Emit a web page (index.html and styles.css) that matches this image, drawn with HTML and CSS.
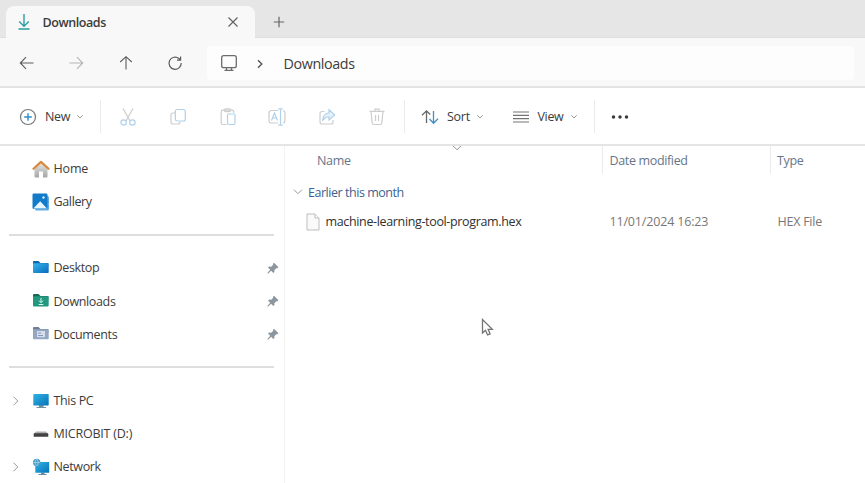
FILE: index.html
```
<!DOCTYPE html>
<html lang="en">
<head>
<meta charset="utf-8">
<title>Downloads</title>
<link rel="stylesheet" href="styles.css">
</head>
<body>
<div class="window">
  <header class="tabs">
    <div class="tab">
      <svg class="tab-icon" width="14" height="18" viewBox="0 0 14 18" fill="none" stroke="#2b9fa5" stroke-width="1.4"><path d="M7 1v12M2.2 8.5 7 13.2l4.800-4.700"/><path d="M1.500 16h11" stroke-width="1.500"/></svg>
      <span class="tab-title">Downloads</span>
      <svg class="tab-close" width="12" height="12" viewBox="0 0 12 12" fill="none" stroke="#606060" stroke-width="1.100"><path d="m1.500 1.500 9 9m0-9-9 9"/></svg>
    </div>
    <svg class="tab-add" width="12" height="12" viewBox="0 0 12 12" fill="none" stroke="#666" stroke-width="1.200"><path d="M6 .8v10.400M.8 6h10.400"/></svg>
  </header>
  <nav class="nav">
    <div class="nav-buttons">
      <svg width="16" height="16" viewBox="0 0 16 16" fill="none" stroke="#5c5c5c" stroke-width="1.100"><path d="M14.500 8h-13M7 2.200 1.300 8 7 13.800"/></svg>
      <svg width="16" height="16" viewBox="0 0 16 16" fill="none" stroke="#b4b4b4" stroke-width="1.100"><path d="M1.500 8h13M9 2.200 14.700 8 9 13.800"/></svg>
      <svg width="16" height="16" viewBox="0 0 16 16" fill="none" stroke="#5c5c5c" stroke-width="1.100"><path d="M8 14.500v-13M2.200 7 8 1.700 13.800 7"/></svg>
      <svg width="16" height="16" viewBox="0 0 16 16" fill="none" stroke="#5c5c5c" stroke-width="1.200"><path d="M14.200 8A6.100 6.100 0 1 1 12 3.500l1.500 1.500M13.600 1.600V5.200H10"/></svg>
    </div>
    <div class="address">
      <svg width="18" height="18" viewBox="0 0 18 18" fill="none" stroke="#6c6c6c" stroke-width="1.300"><rect x="1.700" y="1.700" width="14.600" height="12" rx="2"/><path d="M6.500 13.700v2.500m5-2.500v2.500M4.500 16.300h9"/></svg>
      <svg width="8" height="10" viewBox="0 0 8 10" fill="none" stroke="#555" stroke-width="1.400"><path d="M2 1.200 5.800 5 2 8.800"/></svg>
      <span class="address-text">Downloads</span>
    </div>
  </nav>
  <div class="toolbar">
    <div class="command command-new">
      <svg width="18" height="18" viewBox="0 0 18 18" fill="none" stroke="#777" stroke-width="1.200"><circle cx="9" cy="9" r="7.500"/><path d="M9 5.200v7.600M5.200 9h7.600" stroke="#318ac7" stroke-width="1.400"/></svg>
      <span>New</span>
      <svg class="chevron" width="8" height="6" viewBox="0 0 8 6"><path d="m1.300 1.300 2.700 2.700 2.700-2.700"/></svg>
    </div>
    <div class="edit-commands">
      <svg viewBox="0 0 20 20"><path d="m5 1.500 7 12.500M15 1.500 8 14"/><g class="pale-blue"><circle cx="5.600" cy="15.500" r="2.700"/><circle cx="14.400" cy="15.500" r="2.700"/></g></svg>
      <svg viewBox="0 0 20 20"><path d="M7 6H5a2 2 0 0 0-2 2v7a2 2 0 0 0 2 2h5a2 2 0 0 0 2-2"/><rect class="pale-blue" x="7.300" y="2.500" width="10" height="11.500" rx="2"/></svg>
      <svg viewBox="0 0 20 20"><path d="M8.500 17.500H5A1.800 1.800 0 0 1 3.200 15.700V5A1.800 1.800 0 0 1 5 3.200h9A1.800 1.800 0 0 1 15.800 5v1"/><rect x="6.500" y="1.800" width="6" height="2.800" rx="1"/><rect class="pale-blue" x="9.500" y="7" width="7.500" height="10.500" rx="1.200"/></svg>
      <svg viewBox="0 0 20 20"><path d="M11 3.500H4.500A2.500 2.500 0 0 0 2 6v7.500A2.500 2.500 0 0 0 4.500 16H11m5-12.500a2.500 2.500 0 0 1 2 2.500v7.500a2.500 2.500 0 0 1-2 2.500"/><path class="pale-blue" d="m4.500 13.500 3-7.500 3 7.500m-5-2.500h4M13.500 2v16M11.300 1.800h4.400m-4.400 16.400h4.400"/></svg>
      <svg viewBox="0 0 20 20"><path d="M7.500 4.500H5a2 2 0 0 0-2 2V15a2 2 0 0 0 2 2h9a2 2 0 0 0 2-2v-2"/><path class="pale-blue share-arrow" d="M12 2.800 17.700 8 12 13v-3.200C9 9.500 7.500 11 5.800 13 6 9 8.500 6 12 6z"/></svg>
      <svg viewBox="0 0 20 20"><path d="M2.500 4.300h15M8 4V2.200h4V4M4 4.500 5.200 16a1.700 1.700 0 0 0 1.700 1.500h6.200a1.700 1.700 0 0 0 1.700-1.500L16 4.500M8.500 8v6m3-6v6"/></svg>
    </div>
    <div class="command command-sort">
      <svg width="18" height="16" viewBox="0 0 18 16" fill="none" stroke-width="1.300"><path stroke="#686868" d="M5.500 14V2M1 6.300 5.500 1.800 9.200 5.500"/><path stroke="#408fc7" d="M12.500 2v12M8.500 10l4 4.200L17 9.700"/></svg>
      <span>Sort</span>
      <svg class="chevron" width="8" height="6" viewBox="0 0 8 6"><path d="m1.300 1.300 2.700 2.700 2.700-2.700"/></svg>
    </div>
    <div class="command command-view">
      <svg width="18" height="14" viewBox="0 0 18 14" fill="none" stroke="#747474" stroke-width="1.200"><path d="M1 2h16M1 5.300h16M1 8.700h16M1 12h16"/></svg>
      <span>View</span>
      <svg class="chevron" width="8" height="6" viewBox="0 0 8 6"><path d="m1.300 1.300 2.700 2.700 2.700-2.700"/></svg>
    </div>
    <svg class="more" width="18" height="6" viewBox="0 0 18 6" fill="#3a3a3a"><circle cx="2.500" cy="3" r="1.750"/><circle cx="9" cy="3" r="1.750"/><circle cx="15.500" cy="3" r="1.750"/></svg>
  </div>
  <div class="content">
    <aside class="sidebar">
      <div class="place"><i></i>
        <svg viewBox="0 0 18 18"><defs><linearGradient id="wall" x2="0" y2="1"><stop stop-color="#e6e6e6"/><stop offset="1" stop-color="#a6a6a6"/></linearGradient></defs><path fill="url(#wall)" d="M2.500 8 9 2.500 15.500 8v8.500a1 1 0 0 1-1 1H11v-6H7v6H3.500a1 1 0 0 1-1-1z"/><path fill="none" stroke="#d9883b" stroke-width="2.200" stroke-linecap="round" stroke-linejoin="round" d="M1.500 8.800 9 1.900l7.500 6.900"/></svg>
        <span class="home">Home</span></div>
      <div class="place"><i></i>
        <svg viewBox="0 0 18 18"><rect x="3" y="3" width="14" height="14.500" rx="1.500" fill="#62abe2"/><rect x=".5" y=".5" width="15" height="15.500" rx="1.200" fill="#117bc9"/><path fill="#e8f5ff" d="m1.300 15.500 6.900-7.200 6.800 7.200z"/><circle cx="11.500" cy="4.500" r="1.200" fill="#d5edff"/></svg>
        <span>Gallery</span></div>
      <hr>
      <div class="place"><i></i>
        <svg viewBox="0 0 18 18"><defs><linearGradient id="desk" x2="1" y2="1"><stop stop-color="#35b5ec"/><stop offset="1" stop-color="#0869bf"/></linearGradient></defs><path fill="#0f66a8" d="M1 3a1 1 0 0 1 1-1H6.500L8.500 4h7.800v4H1z"/><rect x="1" y="4.300" width="15.700" height="9.700" rx=".8" fill="url(#desk)"/></svg>
        <span>Desktop</span>
        <svg class="pin" viewBox="0 0 14 14"><path d="m8 1.800 4.500 4.500-1.200 1-1-.1-2 2 .2 1.800-1.200 1-2.200-2.300L2 12.700l-.7-.6 2.900-3.300L2 6.500l1.200-1 2 .2 2-2-.2-.9z"/></svg></div>
      <div class="place"><i></i>
        <svg viewBox="0 0 18 18"><path fill="#176957" d="M1 3a1 1 0 0 1 1-1H6.500L8.500 4h7.800v4H1z"/><rect x="1" y="4.200" width="15.700" height="10.200" rx=".8" fill="#23977f"/><path fill="none" stroke="#d4fff1" d="M9 6v4.500M7 8.700l2 2 2-2M6.700 12.500h4.600"/></svg>
        <span>Downloads</span>
        <svg class="pin" viewBox="0 0 14 14"><path d="m8 1.800 4.500 4.500-1.200 1-1-.1-2 2 .2 1.800-1.200 1-2.200-2.300L2 12.700l-.7-.6 2.900-3.300L2 6.500l1.200-1 2 .2 2-2-.2-.9z"/></svg></div>
      <div class="place"><i></i>
        <svg viewBox="0 0 18 18"><path fill="#6e7e94" d="M1 3a1 1 0 0 1 1-1H6.500L8.500 4h7.800v4H1z"/><rect x="1" y="4.200" width="15.700" height="10" rx=".8" fill="#94a6c0"/><rect x="5" y="6" width="8" height="6.200" fill="#d5deeb"/><path stroke="#8799b4" d="M6 8h3m-3 2.500h5"/></svg>
        <span>Documents</span>
        <svg class="pin" viewBox="0 0 14 14"><path d="m8 1.800 4.500 4.500-1.200 1-1-.1-2 2 .2 1.800-1.200 1-2.200-2.300L2 12.700l-.7-.6 2.900-3.300L2 6.500l1.200-1 2 .2 2-2-.2-.9z"/></svg></div>
      <hr>
      <div class="place"><svg class="expander" viewBox="0 0 8 12"><path d="m1.500 1.700 4.300 4.300-4.300 4.300"/></svg>
        <svg viewBox="0 0 18 18"><defs><linearGradient id="screen" x2="1" y2="1"><stop stop-color="#2eb4e5"/><stop offset="1" stop-color="#0872b8"/></linearGradient></defs><path fill="#77909e" d="M7 13h4.500v2H14v1H4.500v-1H7z"/><rect x="1.300" y="2" width="15.400" height="11.500" rx=".7" fill="url(#screen)"/></svg>
        <span>This PC</span></div>
      <div class="place"><i></i>
        <svg viewBox="0 0 18 18"><path fill="#adadad" d="M4 6.500h10l2.300 2.500H1.700z"/><rect x="1.700" y="8.300" width="14.600" height="3.500" rx=".6" fill="#424242"/></svg>
        <span class="drive">MICROBIT (D:)</span></div>
      <div class="place"><svg class="expander" viewBox="0 0 8 12"><path d="m1.500 1.700 4.300 4.300-4.300 4.300"/></svg>
        <svg viewBox="0 0 18 18"><path fill="#648da4" d="M9 14.500h3.500v1.500h2v1H6.500v-1H9z"/><rect x="3.300" y="4" width="13.900" height="10.800" rx=".6" fill="url(#screen)"/><circle cx="4.700" cy="4.500" r="3.700" fill="#4c9bc4"/><path fill="none" stroke="#b8e4f7" stroke-width=".6" d="M1.500 4.500h6.400M4.700 1c-2 2-2 5 0 7m0-7c2 2 2 5 0 7"/></svg>
        <span>Network</span></div>
    </aside>
    <main class="files">
      <div class="columns">
        <div class="name-column">Name<svg class="sort-mark" width="10" height="6" viewBox="0 0 10 6"><path d="m1 1 4 3.700L9 1"/></svg></div>
        <div class="date-column">Date modified</div>
        <div class="type-column">Type</div>
      </div>
      <div class="group"><svg width="10" height="8" viewBox="0 0 10 8"><path d="m1 1.700 4 4 4-4"/></svg><span>Earlier this month</span></div>
      <div class="file">
        <div class="file-name"><svg width="14" height="18" viewBox="0 0 14 18" fill="#fafafa" stroke="#bdbdbd"><path d="M1 1h8l4 4v12H1z"/><path d="M9 1v4h4"/></svg><span>machine-learning-tool-program.hex</span></div>
        <div class="file-date">11/01/2024 16:23</div>
        <div class="file-type">HEX File</div>
      </div>
    </main>
  </div>
  <svg class="cursor" width="13" height="19" viewBox="0 0 13 19"><path d="M1.500 1.500v13.600l3-2.800 2.100 4.600 2.500-1.100-2-4.500h4.200z"/></svg>
</div>
</body>
</html>
```
FILE: styles.css
```
* { box-sizing: border-box; }
body {
  margin: 0;
  font: 12.500px/18px "Open Sans", "Noto Sans", sans-serif;
  letter-spacing: -.35px;
  color: #3c3c3c;
  background: #fff;
}
svg { display: block; flex: none; }
.window {
  position: relative;
  display: flex;
  flex-direction: column;
  width: 865px;
  height: 483px;
  overflow: hidden;
}
.tabs {
  display: flex;
  height: 38px;
  padding: 6px 0 0 6px;
  background: #e6e6e6;
  border-bottom: 1px solid #dedede;
}
.tab {
  display: flex;
  align-items: center;
  width: 249px;
  height: 33px;
  padding: 0 16px 1px 11px;
  background: #f8f8f8;
  border-radius: 8px 8px 0 0;
}
.tab-title { margin: 1px 0 0 11.500px; font-weight: 600; letter-spacing: -.42px; }
.tab-close { margin-left: auto; }
.tab-add { margin: 10px 0 0 18px; }
.nav {
  display: flex;
  align-items: center;
  height: 50px;
  background: #f8f8f8;
  border-bottom: 2px solid #e3e3e3;
}
.nav-buttons { display: flex; gap: 33.600px; width: 207px; padding: 2px 0 0 18.500px; }
.address {
  display: flex;
  align-items: center;
  width: 647px;
  height: 34px;
  margin-top: 2px;
  padding-left: 13px;
  background: #fdfdfd;
  border-radius: 4px;
}
.address svg + svg { margin: 1px 0 0 18px; }
.address-text { margin: 1px 0 0 19.500px; font-size: 14.300px; letter-spacing: -.38px; }
.toolbar {
  display: flex;
  align-items: center;
  height: 58px;
  padding-top: 1px;
  background: #fff;
  border-bottom: 2px solid #e5e5e5;
}
.command { display: flex; align-items: center; height: 33px; border-right: 1px solid #ebebeb; }
.command span { margin-top: 1px; }
.command-new { width: 101px; padding-left: 19px; }
.command-new span { width: 31px; margin-left: 8px; }
.chevron, .sort-mark, .group svg, .expander { fill: none; stroke: #999; stroke-width: 1; }
.edit-commands {
  display: flex;
  align-items: center;
  gap: 29.800px;
  width: 304px;
  height: 33px;
  padding-left: 17px;
  border-right: 1px solid #ebebeb;
}
.edit-commands svg { width: 20px; height: 20px; fill: none; stroke: #cdcdcd; stroke-width: 1.200; }
.edit-commands .pale-blue { stroke: #afd1ec; }
.edit-commands .share-arrow { fill: #e6f2fb; }
.command-sort { width: 106px; padding-left: 16px; border: 0; }
.command-sort span { width: 28.500px; margin-left: 8px; letter-spacing: -.25px; }
.command-view { width: 84px; padding-left: 1px; }
.command-view span { width: 32px; margin-left: 7.500px; }
.more { margin: 1px 0 0 16px; }
.content { display: flex; flex: 1; min-height: 0; }
.sidebar { width: 285px; padding-top: 6px; border-right: 1px solid #f2f2f2; }
.place { display: flex; align-items: center; height: 33.150px; padding: 0 4px 0 12px; }
.place i { width: 8px; }
.place .expander { width: 8px; height: 12px; }
.place > svg:nth-child(2) { width: 18px; height: 18px; margin-left: 12px; }
.place span { margin: 1px 0 0 3.500px; }
.place .home { letter-spacing: -.15px; }
.place .drive { font-size: 12.500px; letter-spacing: -.22px; }
.pin { width: 14px; height: 14px; margin-left: auto; fill: #8c969e; }
.sidebar hr { width: 265px; height: 2px; margin: 15.500px 0 15.650px 9px; border: 0; background: #dedede; }
.files { flex: 1; }
.columns { display: flex; height: 28px; color: #66758a; line-height: 29px; }
.name-column { position: relative; width: 317px; padding-left: 32px; }
.sort-mark { position: absolute; left: 167px; top: -1px; }
.date-column { width: 168px; padding-left: 6.500px; border-left: 1px solid #ebebeb; }
.type-column { padding-left: 6px; border-left: 1px solid #ebebeb; }
.group { display: flex; align-items: center; height: 35px; padding: 1px 0 0 8px; color: #405f92; }
.group span { margin: 1px 0 0 5px; letter-spacing: -.46px; }
.file { display: flex; align-items: center; height: 26px; color: #777; }
.file-name { display: flex; align-items: center; width: 324.500px; padding-left: 21px; color: #303030; }
.file-name span { margin-left: 5.500px; }
.file-date { width: 168px; letter-spacing: -.17px; }
.file-type { letter-spacing: -.25px; }
.cursor { position: absolute; left: 481px; top: 318px; fill: #fff; stroke: #747474; stroke-width: 1.300; }
```
